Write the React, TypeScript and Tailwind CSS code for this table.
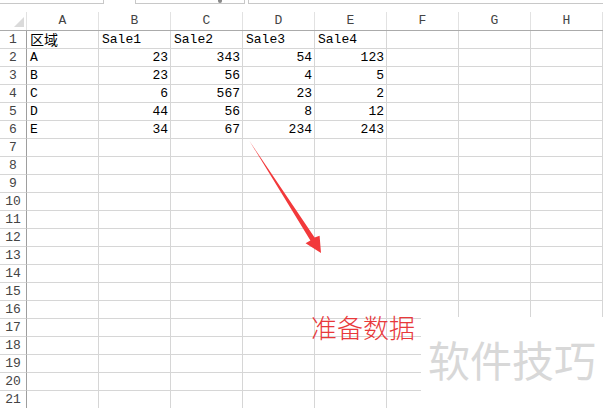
const cols = ["A", "B", "C", "D", "E", "F", "G", "H"];

const data: (string | number)[][] = [
  ["区域", "Sale1", "Sale2", "Sale3", "Sale4"],
  ["A", 23, 343, 54, 123],
  ["B", 23, 56, 4, 5],
  ["C", 6, 567, 23, 2],
  ["D", 44, 56, 8, 12],
  ["E", 34, 67, 234, 243],
];

const mono = { fontFamily: '"Liberation Mono", "Noto Sans CJK SC", monospace' };

function Cell({ value }: { value?: string | number }) {
  const isNum = typeof value === "number";
  const isCjk = typeof value === "string" && /[\u4e00-\u9fff]/.test(value);
  return (
    <div
      className={`w-[72px] shrink-0 h-full border-r border-b border-[#d6d6d6] flex items-center whitespace-nowrap text-[13px] leading-[17px] text-black ${
        isNum ? "justify-end pr-[2px]" : "justify-start pl-[3px]"
      }`}
    >
      {value !== undefined && (
        <span
          className={isCjk ? "text-[14px] leading-[17px]" : ""}
          style={isCjk ? { fontFamily: '"Noto Sans CJK SC", sans-serif' } : undefined}
        >
          {value}
        </span>
      )}
    </div>
  );
}

export default function App() {
  const rows = Array.from({ length: 21 }, (_, i) => i + 1);
  return (
    <div className="relative w-[603px] h-[408px] overflow-hidden bg-white" style={mono}>
      {/* formula bar remnants */}
      <div className="flex h-[4px]">
        <div className="w-[104px] border-r border-b border-[#c8c8c8]" />
        <div className="w-[31px]" />
        <div className="relative w-[110px] border-l border-r border-b border-[#c8c8c8]">
          <div className="absolute left-[82px] top-0 w-[4px] h-[3px] rounded-b-full bg-[#8a8a8a]" />
        </div>
        <div className="w-[3px]" />
        <div className="flex-1 border-l border-b border-[#c8c8c8]" />
      </div>
      <div className="h-[8px]" />

      {/* column headers */}
      <div className="flex h-[19px] border-b border-[#ababab]">
        <div className="w-[27px] shrink-0 border-r border-[#e2e2e2] flex items-end justify-end pr-[2px] pb-[3px]">
          <svg width="10" height="10" viewBox="0 0 10 10">
            <polygon points="10,0 10,10 0,10" fill="#dadada" />
          </svg>
        </div>
        {cols.map((c) => (
          <div
            key={c}
            className="w-[72px] shrink-0 border-r border-[#e2e2e2] flex items-center justify-center text-[13px] text-[#444]"
          >
            {c}
          </div>
        ))}
      </div>

      {/* rows */}
      {rows.map((r) => (
        <div key={r} className="flex h-[18px]">
          <div className="w-[27px] shrink-0 h-full border-r border-r-[#9e9e9e] border-b border-b-[#d6d6d6] flex items-center justify-center text-[13px] text-[#444]">
            {r}
          </div>
          {cols.map((c, ci) => (
            <Cell key={c} value={data[r - 1]?.[ci]} />
          ))}
        </div>
      ))}

      {/* red arrow annotation */}
      <svg className="absolute left-0 top-0" width="603" height="408" viewBox="0 0 603 408">
        <polygon
          points="249.5,141 314.6,237.6 319.6,235.8 321,253 305.6,243.2 310.4,240.6"
          fill="#f2393b"
        />
      </svg>

      {/* annotation text */}
      <div
        className="absolute left-[311px] top-[312px] text-[26px] leading-[30px] text-[#e8393b] whitespace-nowrap"
        style={{ fontFamily: '"Noto Sans CJK SC", sans-serif', fontWeight: 300 }}
      >
        准备数据
      </div>

      {/* watermark */}
      <div className="absolute left-[421px] top-[317px] w-[182px] h-[91px] bg-white flex items-start justify-center pt-[16px]">
        <span
          className="text-[42px] leading-[52px] text-[#d8d8d8] whitespace-nowrap"
          style={{ fontFamily: '"Noto Sans CJK SC", sans-serif' }}
        >
          软件技巧
        </span>
      </div>
    </div>
  );
}
